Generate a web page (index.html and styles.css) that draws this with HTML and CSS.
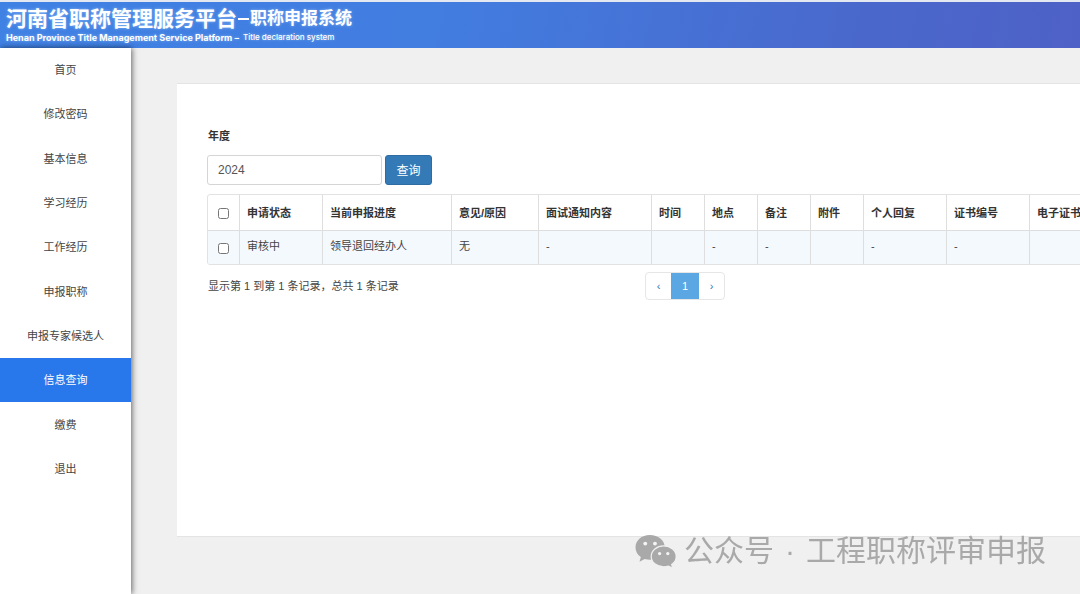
FILE: index.html
```html
<!DOCTYPE html>
<html lang="zh-CN">
<head>
<meta charset="utf-8">
<title>河南省职称管理服务平台</title>
<link rel="stylesheet" href="styles.css">
</head>
<body>
<header class="topbar">
  <h1 class="title">河南省职称管理服务平台<span class="dash"></span><span class="title-sub">职称申报系统</span></h1>
  <p class="subtitle">Henan Province Title Management Service Platform – <span class="subtitle-sub">Title declaration system</span></p>
</header>
<div class="layout">
  <nav class="sidebar">
    <ul class="menu">
      <li><a href="#">首页</a></li>
      <li><a href="#">修改密码</a></li>
      <li><a href="#">基本信息</a></li>
      <li><a href="#">学习经历</a></li>
      <li><a href="#">工作经历</a></li>
      <li><a href="#">申报职称</a></li>
      <li><a href="#">申报专家候选人</a></li>
      <li><a href="#" class="active">信息查询</a></li>
      <li><a href="#">缴费</a></li>
      <li><a href="#">退出</a></li>
    </ul>
  </nav>
  <main class="main">
    <section class="panel">
      <form class="search">
        <label class="search-label" for="year">年度</label>
        <div class="search-row">
          <input class="search-input" id="year" type="text" value="2024">
          <button class="search-button" type="button">查询</button>
        </div>
      </form>
      <div class="table-box">
        <table class="records">
          <colgroup>
            <col class="c-check"><col class="c-mid"><col class="c-progress"><col class="c-reason"><col class="c-notice"><col class="c-short"><col class="c-short"><col class="c-short"><col class="c-short"><col class="c-mid"><col class="c-mid"><col>
          </colgroup>
          <thead>
            <tr>
              <th class="check"><input type="checkbox" aria-label="全选"></th>
              <th>申请状态</th><th>当前申报进度</th><th>意见/原因</th><th>面试通知内容</th><th>时间</th><th>地点</th><th>备注</th><th>附件</th><th>个人回复</th><th>证书编号</th><th>电子证书</th>
            </tr>
          </thead>
          <tbody>
            <tr>
              <td class="check"><input type="checkbox" aria-label="选择记录"></td>
              <td>审核中</td><td>领导退回经办人</td><td>无</td><td>-</td><td></td><td>-</td><td>-</td><td></td><td>-</td><td>-</td><td></td>
            </tr>
          </tbody>
        </table>
      </div>
      <div class="table-foot">
        <span class="summary">显示第 1 到第 1 条记录，总共 1 条记录</span>
        <div class="pager">
          <button type="button" aria-label="上一页">‹</button>
          <button type="button" class="current">1</button>
          <button type="button" aria-label="下一页">›</button>
        </div>
      </div>
    </section>
  </main>
</div>
<div class="watermark">
  <svg class="watermark-icon" viewBox="0 0 40 34" aria-hidden="true">
    <path fill="#a9a9a9" d="M14.500 1C6.500 1 .5 6.300 .5 13c0 3.900 2 7.200 5.200 9.400L4.400 27l5-2.700c1.700.5 3.400.7 5.400.7C22.500 25 29 20 29 13S22.500 1 14.500 1Z"/>
    <path fill="#a9a9a9" stroke="#f0f0f0" stroke-width="1.200" d="M28 11.500c-6.700 0-12.200 4.600-12.200 10.300S21.300 32 28 32c1.700 0 3.300-.3 4.700-.8l4.200 2.300-1.100-3.900c2.700-1.900 4.400-4.700 4.400-7.800 0-5.700-5.500-10.300-12.200-10.300Z"/>
    <g fill="#f4f4f4"><circle cx="10" cy="9.300" r="1.900"/><circle cx="19.500" cy="9.300" r="1.900"/><circle cx="24" cy="19" r="1.600"/><circle cx="32" cy="19" r="1.600"/></g>
  </svg>
  <div class="watermark-text"><span>公众号</span><span>·</span><span>工程职称评审申报</span></div>
</div>
</body>
</html>
```
FILE: styles.css
```css
* {
  box-sizing: border-box;
}

body {
  margin: 0;
  min-height: 100vh;
  display: flex;
  flex-direction: column;
  background: #f0f0f0;
  color: #333;
  font: 11px/16px "Liberation Sans", "Noto Sans CJK SC", sans-serif;
}

.topbar {
  padding: 6px 6px 3px;
  border-top: 2px solid #e4e8f0;
  background: linear-gradient(100deg, #4081e4 0%, #427de0 40%, #4a68cc 80%, #4e61c6 100%);
  background-clip: padding-box;
  color: #fff;
  text-shadow: 0 0 3px rgba(190, 225, 255, 0.6);
  white-space: nowrap;
}

.title {
  display: flex;
  align-items: center;
  margin: 0;
  font-size: 21px;
  line-height: 22px;
  font-weight: 700;
}

.dash {
  width: 11px;
  height: 2px;
  margin: 0 1px;
  background: #fff;
}

.title-sub {
  font-size: 17px;
}

.subtitle {
  display: flex;
  align-items: center;
  gap: 4px;
  margin: 0;
  font: 700 9px/15px Inter, "Open Sans", sans-serif;
}

.subtitle-sub {
  font-size: 8px;
  font-weight: 500;
}

.layout {
  flex: 1;
  display: flex;
}

.sidebar {
  flex: 0 0 131px;
  background: #fff;
  box-shadow: 1px 0 6px rgba(0, 0, 0, 0.6);
}

.menu {
  display: grid;
  grid-auto-rows: 1fr;
  height: 443px;
  margin: 0;
  padding: 0;
  list-style: none;
}

.menu a {
  display: flex;
  align-items: center;
  justify-content: center;
  height: 100%;
  color: #444;
  text-decoration: none;
}

.menu .active {
  background: #2878eb;
  color: #fff;
}

.main {
  flex: 1;
  min-width: 0;
  padding: 35px 0 0 46px;
  overflow: hidden;
}

.panel {
  min-width: 1016px;
  min-height: 454px;
  padding: 44px 31px;
  border: solid #e4e4e4;
  border-width: 1px 0;
  background: #fff;
}

.search-label {
  display: block;
  margin-bottom: 11px;
  font-weight: 700;
}

.search-row {
  display: flex;
  gap: 3px;
  margin-left: -1px;
}

.search-input {
  width: 175px;
  height: 30px;
  padding: 0 10px;
  border: 1px solid #d5d5d5;
  border-radius: 3px;
  color: #555;
  font: 12px "Liberation Sans", sans-serif;
}

.search-button {
  width: 47px;
  height: 30px;
  padding: 0 0 2px;
  border: 1px solid #2e6da4;
  border-radius: 3px;
  background: #337ab7;
  color: #fff;
  font: 12px "Liberation Sans", "Noto Sans CJK SC", sans-serif;
}

.table-box {
  margin: 9px 0 0 -1px;
  border: 1px solid #e2e2e2;
  border-radius: 3px;
  overflow: hidden;
}

.records {
  width: 100%;
  table-layout: fixed;
  border-collapse: separate;
  border-spacing: 0;
}

.records th,
.records td {
  height: 33px;
  padding: 0 7px;
  border-right: 1px solid #dedede;
  text-align: left;
  white-space: nowrap;
}

.records th {
  height: 36px;
  border-bottom: 1px solid #dedede;
}

.records td {
  padding-bottom: 4px;
  background: #f4f9fe;
  color: #444;
}

.records .check {
  padding: 0;
  text-align: center;
}

.check input {
  width: 11px;
  height: 11px;
  margin: 0;
  vertical-align: middle;
}

.c-check { width: 32px; }
.c-mid { width: 83px; }
.c-progress { width: 129px; }
.c-reason { width: 87px; }
.c-notice { width: 113px; }
.c-short { width: 53px; }

.table-foot {
  display: grid;
  grid-template-columns: 1fr auto 1fr;
  align-items: center;
  margin-top: 7px;
}

.summary {
  color: #444;
}

.pager {
  display: flex;
  border: 1px solid #e6e6e6;
  border-radius: 4px;
}

.pager button {
  width: 25px;
  height: 26px;
  padding: 0;
  border: 0;
  background: none;
  color: #337ab7;
  font: 11px "Liberation Sans", sans-serif;
}

.pager .current {
  width: 28px;
  background: #5aa7e4;
  color: #fff;
}

.watermark {
  position: fixed;
  right: 34px;
  bottom: 21px;
  display: flex;
  align-items: center;
  gap: 8px;
  color: #a9a9a9;
  font: 400 30px/44px "Liberation Sans", "Noto Sans CJK SC", sans-serif;
  white-space: nowrap;
}

.watermark-text {
  display: flex;
  gap: 11px;
}

.watermark-icon {
  width: 41px;
  height: 35px;
}
```
